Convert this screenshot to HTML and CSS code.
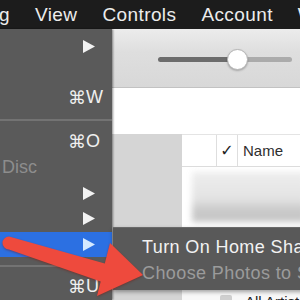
FILE: index.html
```html
<!DOCTYPE html>
<html>
<head>
<meta charset="utf-8">
<link rel="stylesheet" href="styles.css">
</head>
<body>
<div class="menubar">
  <span>Song</span><span>View</span><span>Controls</span><span>Account</span><span>Window</span>
</div>
<div class="screen">
  <div class="menu">
    <div class="row"><span class="label">New</span><span class="key"><svg class="tri" viewBox="0 0 12 13"><polygon points="0,0 12,6.5 0,13"/></svg></span></div>
    <div class="row"><span class="label">Edit Playlist</span><span class="key"></span></div>
    <div class="row"><span class="label">Close Window</span><span class="key"><span class="cmd">⌘</span>W</span></div>
    <div class="sep"></div>
    <div class="row"><span class="label">Add to Library</span><span class="key"><span class="cmd">⌘</span>O</span></div>
    <div class="row"><span class="label disabled">Burn Playlist to Disc</span><span class="key"></span></div>
    <div class="row"><span class="label">Library</span><span class="key"><svg class="tri" viewBox="0 0 12 13"><polygon points="0,0 12,6.5 0,13"/></svg></span></div>
    <div class="row"><span class="label">Devices</span><span class="key"><svg class="tri" viewBox="0 0 12 13"><polygon points="0,0 12,6.5 0,13"/></svg></span></div>
    <div class="row active"><span class="label">Home Sharing</span><span class="key"><svg class="tri" viewBox="0 0 12 13"><polygon points="0,0 12,6.5 0,13"/></svg></span></div>
    <div class="sep sep2"></div>
    <div class="row"><span class="label">Open Stream</span><span class="key"><span class="cmd">⌘</span>U</span></div>
  </div>
  <div class="window">
    <div class="toolbar">
      <div class="slider">
        <div class="fill"></div>
        <div class="knob"></div>
        <div class="rest"></div>
      </div>
    </div>
    <div class="blank"></div>
    <div class="content">
      <div class="side"></div>
      <div class="table">
        <div class="header">
          <div class="c1"></div>
          <div class="c2">✓</div>
          <div class="c3">Name</div>
        </div>
        <div class="blurrow"><div class="blurbox"></div></div>
        <div class="trow"></div>
        <div class="trow"></div>
        <div class="trow last"><span class="check"></span><span class="tname">All Artists</span></div>
      </div>
    </div>
  </div>
</div>
<div class="submenu">
  <div class="subrow">Turn On Home Sharing…</div>
  <div class="subrow disabled">Choose Photos to Share…</div>
</div>
<svg class="arrow" viewBox="0 0 300 300" width="300" height="300">
  <path d="M 9 236.5 L 104.8 263.5 L 110 243 L 143 275 L 97 296 L 100.7 281.5 L 9 249.5 A 6.5 6.5 0 0 1 9 236.5 Z"/>
</svg>
</body>
</html>
```
FILE: styles.css
```css
html, body {
  margin: 0;
  padding: 0;
}
body {
  width: 300px;
  height: 300px;
  overflow: hidden;
  position: relative;
  background: #ffffff;
  font-family: "Liberation Sans", "DejaVu Sans", sans-serif;
}
.menubar {
  height: 29px;
  background: #1c1c1c;
  color: #ececec;
  display: flex;
  gap: 25px;
  margin-left: -36px;
  font-size: 19px;
  letter-spacing: 0.4px;
  line-height: 29px;
  white-space: nowrap;
}
.screen {
  display: flex;
  height: 271px;
}
.menu {
  position: relative;
  z-index: 2;
  flex: 0 0 262px;
  margin-left: -150px;
  background: #5a5a5a;
  padding-top: 5px;
  box-shadow: 1px 0 2px rgba(0,0,0,0.45);
  color: #eeeeee;
  font-size: 18px;
}
.row {
  height: 25.6px;
  display: flex;
  align-items: center;
  white-space: nowrap;
}
.label {
  flex: 1;
  padding-left: 27px;
}
.label.disabled {
  color: #8d8d8d;
}
.key {
  width: 36px;
  margin-right: 8px;
  display: flex;
  align-items: center;
  justify-content: flex-start;
  color: #f0f0f0;
}
.cmd {
  display: inline-block;
  width: 18px;
  font-family: "DejaVu Sans", sans-serif;
  font-size: 18px;
}
.tri {
  width: 12px;
  height: 13px;
  margin-left: 15px;
  fill: #f2f2f2;
}
.row.active {
  background: #2c70e2;
}
.row.active .tri {
  fill: #d4e9ff;
}
.sep {
  height: 18.4px;
  display: flex;
  align-items: center;
}
.sep::before {
  content: "";
  flex: 1;
  height: 2px;
  background: #737373;
}
.sep2 {
  height: 17px;
}
.window {
  flex: 1;
  display: flex;
  flex-direction: column;
  background: #ffffff;
}
.toolbar {
  flex-shrink: 0;
  height: 59px;
  background: linear-gradient(to bottom, #ececec, #dedede 40%, #d8d8d8);
  border-bottom: 1px solid #c2c2c2;
  display: flex;
  align-items: center;
  padding-top: 2px;
  box-sizing: border-box;
}
.slider {
  margin-left: 46px;
  width: 134px;
  display: flex;
  align-items: center;
}
.fill {
  width: 73px;
  height: 5px;
  border-radius: 3px 0 0 3px;
  background: #6c6c6c;
}
.knob {
  position: relative;
  z-index: 1;
  width: 19px;
  height: 19px;
  margin: 0 -4px;
  border-radius: 50%;
  background: #ffffff;
  border: 1px solid #b5b5b5;
  box-shadow: 0 1px 2px rgba(0,0,0,0.25);
}
.rest {
  flex: 1;
  height: 5px;
  border-radius: 0 3px 3px 0;
  background: #ababab;
}
.blank {
  flex-shrink: 0;
  height: 46px;
}
.content {
  flex: 1;
  display: flex;
  min-height: 0;
}
.side {
  width: 70px;
  background: #d5d5d5;
}
.table {
  flex: 1;
  display: flex;
  flex-direction: column;
  overflow: hidden;
}
.table > div {
  flex-shrink: 0;
}
.header {
  height: 31px;
  border-top: 1px solid #e4e4e4;
  border-bottom: 1px solid #dcdcdc;
  display: flex;
  align-items: stretch;
  font-size: 15px;
  color: #2e2e2e;
}
.c1 {
  width: 34px;
  border-right: 1px solid #dedede;
}
.c2 {
  width: 20px;
  border-right: 1px solid #dedede;
  display: flex;
  align-items: center;
  justify-content: center;
  font-family: "DejaVu Sans", sans-serif;
  font-size: 16px;
  color: #222;
}
.c3 {
  padding-left: 5px;
  display: flex;
  align-items: center;
}
.blurrow {
  height: 60px;
  overflow: hidden;
}
.blurbox {
  margin: 5px 0 0 10px;
  height: 50px;
  background: linear-gradient(to bottom, #eeeeee 0%, #e3e3e3 55%, #cacaca 75%, #c5c5c5 100%);
  filter: blur(3px);
}
.trow {
  height: 30px;
}
.trow.last {
  display: flex;
  align-items: flex-start;
  padding-top: 8px;
  background: #f8f8f8;
  white-space: nowrap;
}
.check {
  flex-shrink: 0;
  width: 12px;
  height: 12px;
  margin-left: 38px;
  border-radius: 2px;
  background: #cfcfcf;
}
.tname {
  flex-shrink: 0;
  margin-left: 13px;
  font-size: 15px;
  line-height: 14px;
  color: #222;
}
.submenu {
  position: absolute;
  left: 113px;
  top: 227px;
  width: 200px;
  height: 63px;
  box-sizing: border-box;
  padding-top: 6px;
  background: #595959;
  border-top: 1px solid #6a6a6a;
  box-shadow: 0 2px 4px rgba(0,0,0,0.35);
  z-index: 3;
  color: #f2f2f2;
  font-size: 18px;
  letter-spacing: 0.4px;
  white-space: nowrap;
}
.subrow {
  height: 26px;
  line-height: 26px;
  padding-left: 29px;
}
.subrow.disabled {
  color: #9b9b9b;
}
.arrow {
  position: absolute;
  left: 0;
  top: 0;
  z-index: 4;
  fill: #ee4a3d;
  filter: drop-shadow(0 1px 1px rgba(120,20,10,0.45));
}
```
